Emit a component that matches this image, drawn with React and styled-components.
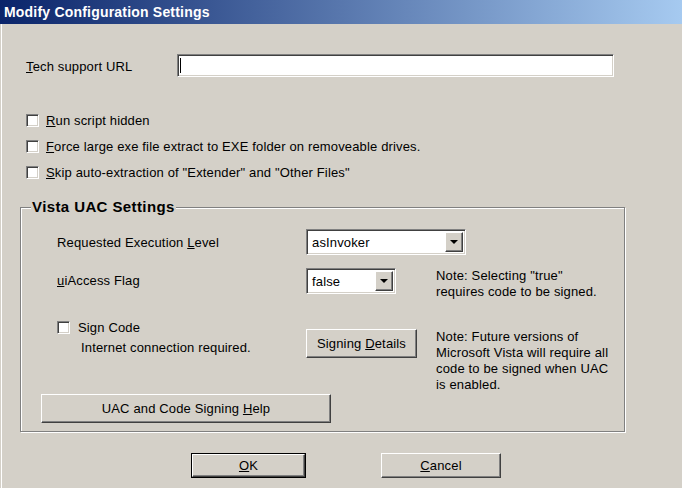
import React from 'react'
import styled, { createGlobalStyle } from 'styled-components'

const GlobalStyle = createGlobalStyle`
  html, body {
    margin: 0;
    padding: 0;
    background: #d4d0c8;
  }
  body {
    font-family: "Liberation Sans", Arial, sans-serif;
    font-size: 13px;
    letter-spacing: 0.15px;
    color: #000;
    overflow: hidden;
  }
`

const sunken = `
  background: #fff;
  border: 1px solid;
  border-color: #808080 #fff #fff #808080;
  box-shadow: inset 1px 1px 0 #404040, inset -1px -1px 0 #d4d0c8;
  box-sizing: border-box;
`

const raised = `
  background: #d4d0c8;
  border: 1px solid;
  border-color: #fff #404040 #404040 #fff;
  box-shadow: inset -1px -1px 0 #808080;
  box-sizing: border-box;
`

const Window = styled.div`
  width: 682px;
  height: 488px;
  display: flex;
  flex-direction: column;
  background: #d4d0c8;
`

const TitleBar = styled.div`
  flex: none;
  height: 24px;
  display: flex;
  align-items: center;
  padding-left: 4px;
  background: linear-gradient(to right, #0a246a, #a6caf0);
  color: #fff;
  font-weight: bold;
  font-size: 14px;
  letter-spacing: 0.2px;
`

const Body = styled.div`
  flex: 1;
  margin-left: 1px;
  border-left: 1px solid #fff;
  padding: 30px 0 0 18px;
  display: flex;
  flex-direction: column;
`

const FieldRow = styled.div`
  display: flex;
  align-items: center;
  margin-left: 6px;
  height: 23px;
`

const FieldLabel = styled.div`
  width: 151px;
  padding-top: 1px;
`

const TextBox = styled.div`
  ${sunken}
  width: 437px;
  height: 23px;
  padding: 3px 2px;
`

const Caret = styled.div`
  width: 1px;
  height: 100%;
  background: #000;
`

const CheckList = styled.div`
  margin: 30px 0 0 6px;
  display: flex;
  flex-direction: column;
`

const CheckRow = styled.label`
  display: flex;
  align-items: center;
  height: ${p => p.$h || 26}px;
  padding-left: ${p => p.$indent || 0}px;
`

const Box = styled.span`
  ${sunken}
  width: 13px;
  height: 13px;
  margin-right: ${p => p.$gap || 7}px;
  flex: none;
`

const Group = styled.div`
  position: relative;
  margin-top: 22px;
  width: 605px;
  height: 225px;
  box-sizing: border-box;
  border: 1px solid #808080;
  box-shadow: inset 1px 1px 0 #fff, 1px 1px 0 #fff;
  padding: 21px 0 0 20px;
`

const GroupTitle = styled.div`
  position: absolute;
  top: -9px;
  left: 10px;
  padding: 0 1px;
  background: #d4d0c8;
  font-size: 15px;
  letter-spacing: 0.4px;
  font-weight: bold;
  line-height: 16px;
`

const GridRow = styled.div`
  display: flex;
  align-items: ${p => p.$align || 'center'};
  margin-top: ${p => p.$mt || 0}px;
`

const Col = styled.div`
  width: ${p => p.$w ? `${p.$w}px` : 'auto'};
  padding-left: ${p => p.$pl || 0}px;
  padding-top: ${p => p.$pt || 0}px;
  flex: none;
  box-sizing: border-box;
`

const Note = styled.div`
  line-height: 16px;
  padding-top: ${p => p.$pt || 0}px;
`

const Select = styled.div`
  ${sunken}
  width: ${p => p.$w}px;
  height: 26px;
  display: flex;
  align-items: stretch;
  padding: 2px;
`

const SelectValue = styled.div`
  flex: 1;
  display: flex;
  align-items: center;
  padding-left: 3px;
`

const ArrowButton = styled.div`
  ${raised}
  width: 18px;
  display: flex;
  align-items: center;
  justify-content: center;
  &::after {
    content: '';
    border-left: 4px solid transparent;
    border-right: 4px solid transparent;
    border-top: 4px solid #000;
  }
`

const SubText = styled.div`
  padding-left: 40px;
  margin-top: 5px;
  line-height: 16px;
`

const Button = styled.div`
  ${raised}
  width: ${p => p.$w}px;
  height: ${p => p.$h || 29}px;
  display: flex;
  align-items: center;
  justify-content: center;
  margin-top: ${p => p.$mt || 0}px;
`

const DefaultButton = styled.div`
  width: ${p => p.$w}px;
  height: 25px;
  border: 1px solid #000;
  box-sizing: border-box;
  display: flex;
  ${Button} {
    flex: 1;
    height: auto;
  }
`

const Footer = styled.div`
  display: flex;
  margin: 21px 0 0 171px;
  gap: 75px;
`

export default function App() {
  return (
    <Window>
      <GlobalStyle />
      <TitleBar>Modify Configuration Settings</TitleBar>
      <Body>
        <FieldRow>
          <FieldLabel><u>T</u>ech support URL</FieldLabel>
          <TextBox><Caret /></TextBox>
        </FieldRow>

        <CheckList>
          <CheckRow><Box /><span><u>R</u>un script hidden</span></CheckRow>
          <CheckRow><Box /><span><u>F</u>orce large exe file extract to EXE folder on removeable drives.</span></CheckRow>
          <CheckRow><Box /><span><u>S</u>kip auto-extraction of "Extender" and "Other Files"</span></CheckRow>
        </CheckList>

        <Group>
          <GroupTitle>Vista UAC Settings</GroupTitle>

          <GridRow>
            <Col $w={265} $pl={16}>Requested Execution <u>L</u>evel</Col>
            <Select $w={160}>
              <SelectValue>asInvoker</SelectValue>
              <ArrowButton />
            </Select>
          </GridRow>

          <GridRow $mt={13} $align="flex-start">
            <Col $w={265} $pl={16} $pt={5}><u>u</u>iAccess Flag</Col>
            <Col $w={130}>
              <Select $w={90}>
                <SelectValue>false</SelectValue>
                <ArrowButton />
              </Select>
            </Col>
            <Note>Note: Selecting "true"<br />requires code to be signed.</Note>
          </GridRow>

          <GridRow $mt={19} $align="flex-start">
            <Col $w={265}>
              <CheckRow $h={16} $indent={16}><Box $gap={8} /><span>Si<u>g</u>n Code</span></CheckRow>
              <SubText>Internet connection required.</SubText>
            </Col>
            <Col $w={130}>
              <Button $w={111} $mt={10}><span>Signing <u>D</u>etails</span></Button>
            </Col>
            <Note $pt={10}>
              Note: Future versions of<br />
              Microsoft Vista will require all<br />
              code to be signed when UAC<br />
              is enabled.
            </Note>
          </GridRow>

          <Button $w={290} $mt={1}><span>UAC and Code Signing <u>H</u>elp</span></Button>
        </Group>

        <Footer>
          <DefaultButton $w={115}><Button><span><u>O</u>K</span></Button></DefaultButton>
          <Button $w={120} $h={25}><span><u>C</u>ancel</span></Button>
        </Footer>
      </Body>
    </Window>
  )
}
